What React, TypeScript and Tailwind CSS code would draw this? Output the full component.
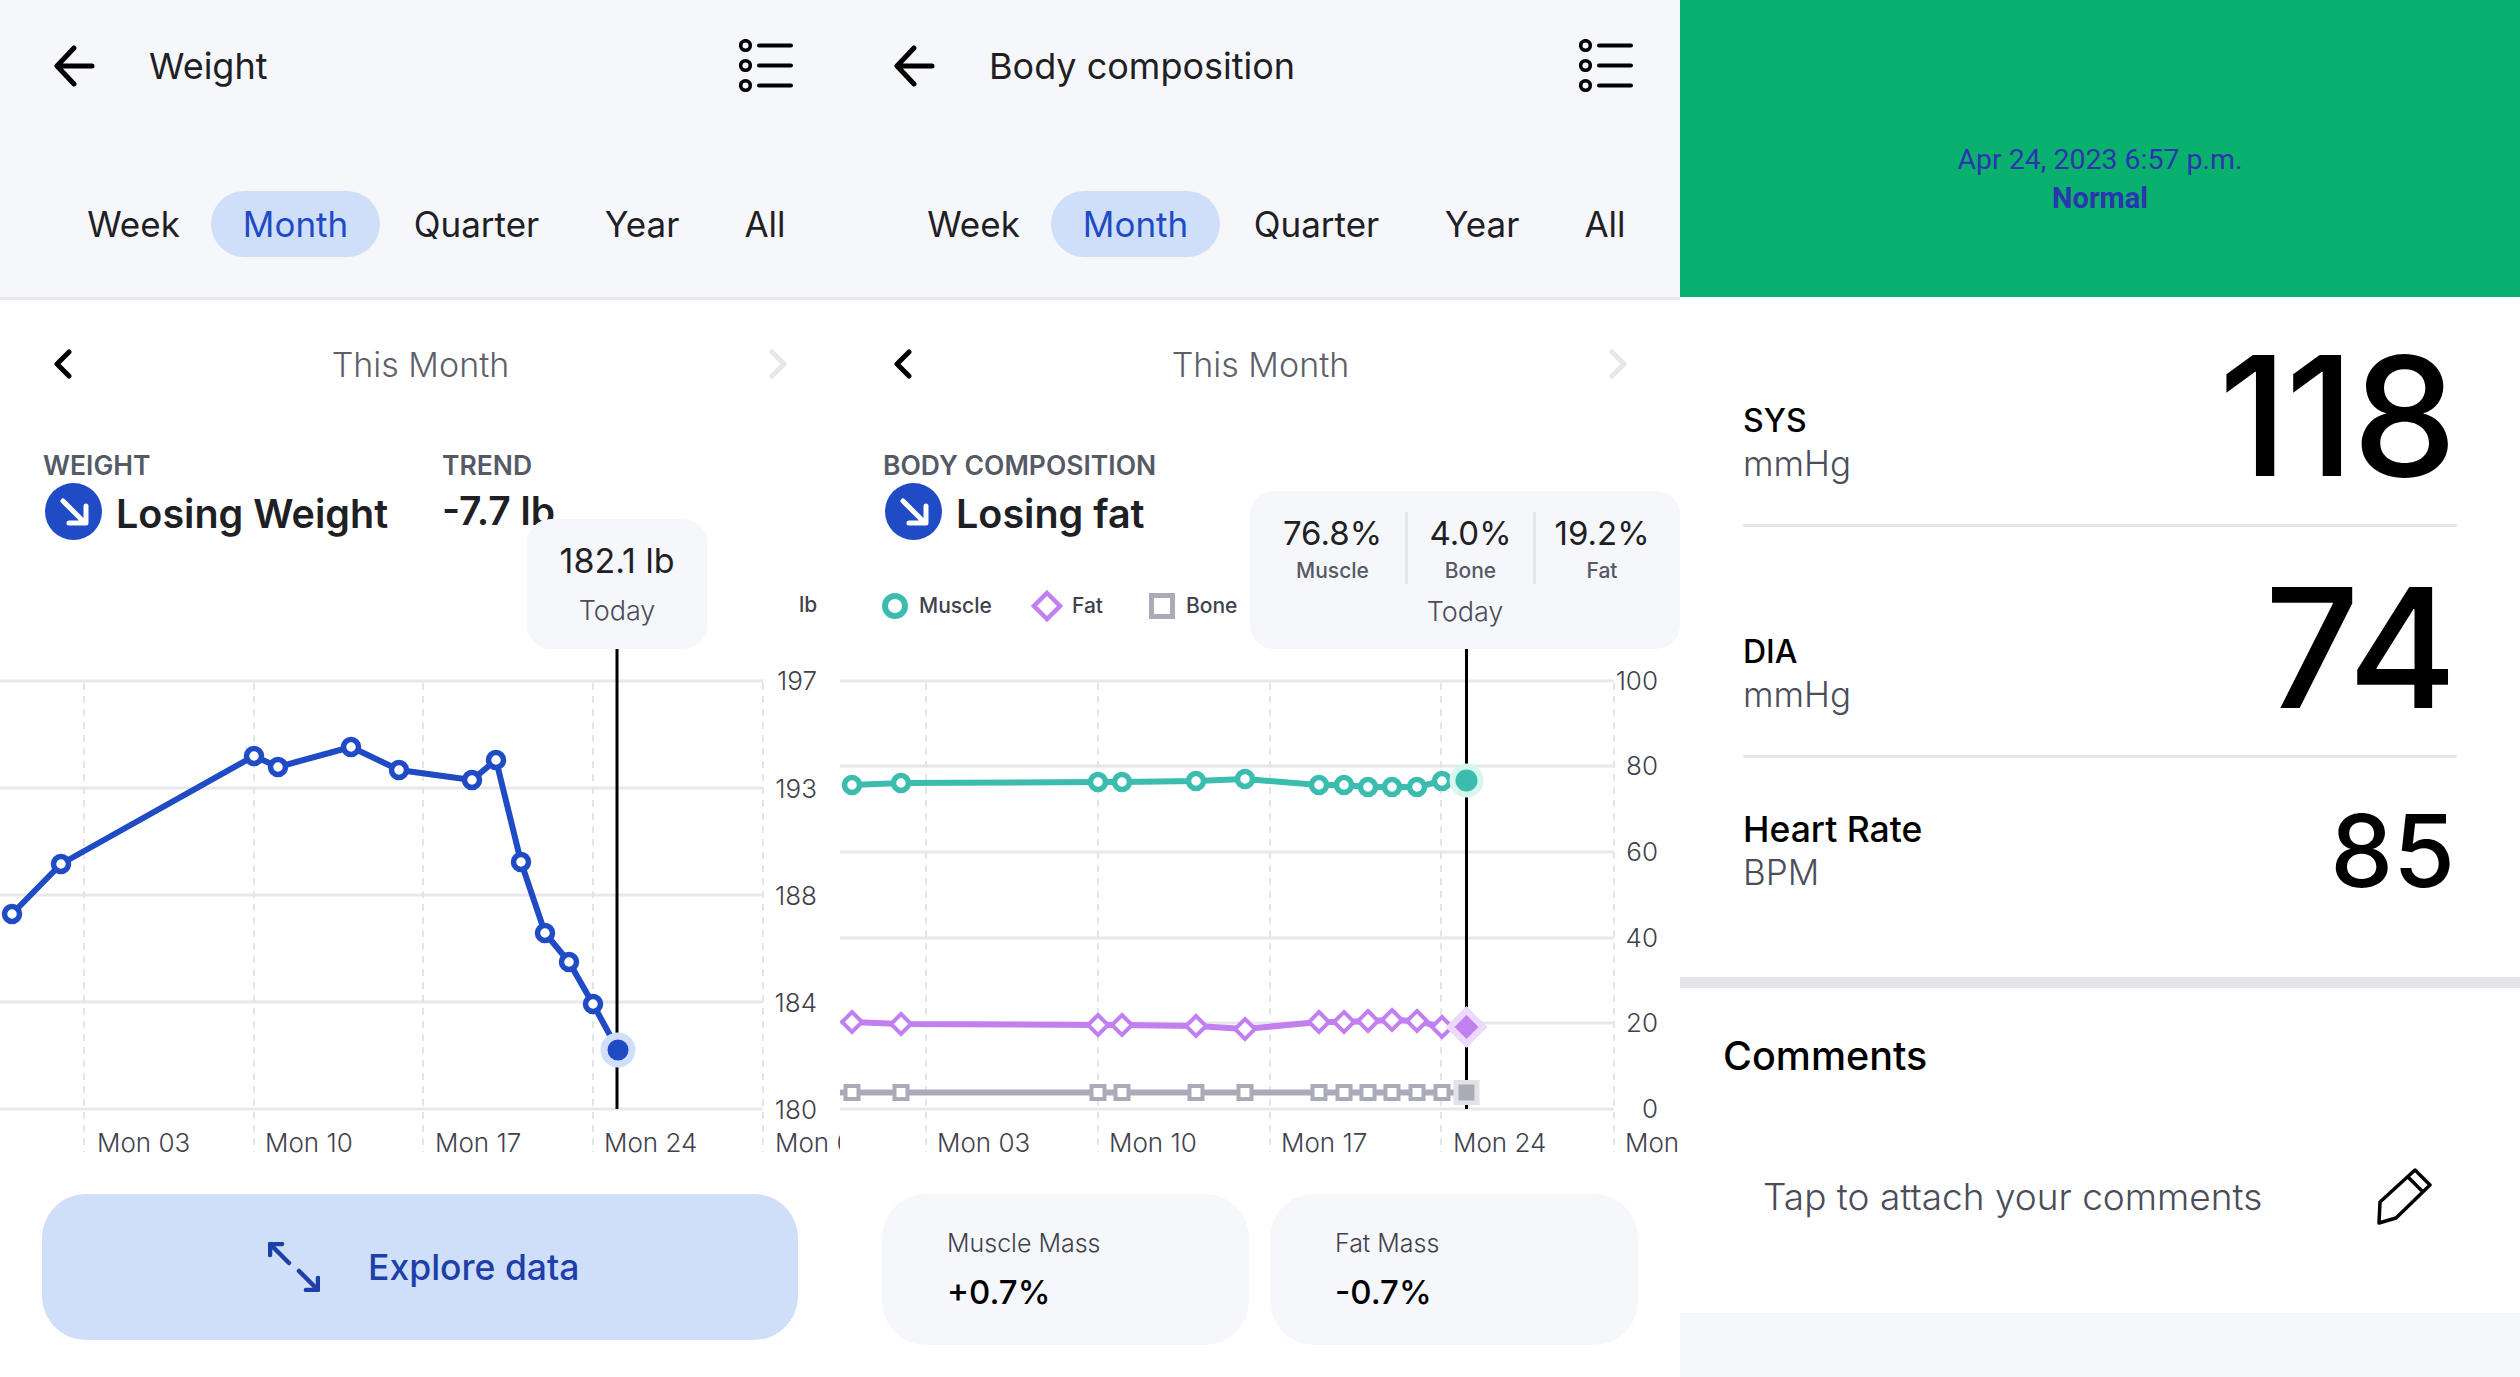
import React from "react";

type Pt = [number, number];

const weightPts: Pt[] = [
  [12, 914], [61, 864], [254, 756], [278, 767], [351, 747], [399, 770],
  [472, 780], [496, 760], [521, 862], [545, 933], [569, 962], [593, 1004],
];
const weightLast: Pt = [618, 1050];

const bodyX = [12, 61, 258, 282, 356, 405, 479, 504, 528, 552, 577, 602];
const muscleY = [785, 783, 782, 782, 781, 779, 785, 785, 787, 787, 787, 781];
const fatY = [1022, 1024, 1025, 1025, 1026, 1029, 1022, 1022, 1021, 1020, 1021, 1027];

const poly = (pts: Pt[]) => pts.map((p) => p.join(",")).join(" ");

const BackIcon = () => (
  <svg width="42" height="42" viewBox="0 0 42 42" fill="none" stroke="#000" strokeWidth="5" strokeLinecap="round" strokeLinejoin="round">
    <path d="M38 21H4M20 3L3 21l17 18" />
  </svg>
);

const ListIcon = () => (
  <svg width="54" height="54" viewBox="0 0 54 54" fill="none" stroke="#000">
    <circle cx="6.5" cy="6.5" r="4.8" strokeWidth="3.6" />
    <circle cx="6.5" cy="26.5" r="4.8" strokeWidth="3.6" />
    <circle cx="6.5" cy="46.5" r="4.8" strokeWidth="3.6" />
    <path d="M20 6.5h32M20 26.5h32M20 46.5h32" strokeWidth="4" strokeLinecap="round" />
  </svg>
);

const Chevron = ({ flip, color }: { flip?: boolean; color: string }) => (
  <svg width="20" height="30" viewBox="0 0 20 30" fill="none" stroke={color} strokeWidth="5" strokeLinecap="round" strokeLinejoin="round" className={flip ? "rotate-180" : ""}>
    <path d="M16 3L4 15l12 12" />
  </svg>
);

const TrendIcon = () => (
  <svg width="57" height="57" viewBox="0 0 57 57" fill="none" className="shrink-0">
    <circle cx="28.5" cy="28.5" r="28.5" fill="#1f4bc4" />
    <path d="M18 18l21 21M41 23v17H24" stroke="#fff" strokeWidth="5" strokeLinecap="round" strokeLinejoin="round" />
  </svg>
);

const Header = ({ title }: { title: string }) => (
  <div className="h-[300px] shrink-0 bg-[#f5f7fb] border-b-[3px] border-[#e5e7eb]">
    <div className="flex h-[132px] items-center pl-[54px] pr-[47px]">
      <BackIcon />
      <div className="ml-[53px] flex-1 text-[36px] text-[#1f2024]">{title}</div>
      <ListIcon />
    </div>
    <div className="mt-[59px] grid h-[66px] grid-cols-[155px_169px_193px_138px_108px] pl-[56px] text-[35px] text-[#1f2024] leading-[66px] text-center">
      <div>Week</div>
      <div className="rounded-full bg-[#cfdffa] text-[#1f4bc4]">Month</div>
      <div>Quarter</div>
      <div>Year</div>
      <div>All</div>
    </div>
  </div>
);

const NavRow = () => (
  <div className="flex h-[128px] items-center justify-between pl-[53px] pr-[52px]">
    <Chevron color="#000" />
    <div className="text-[34px] font-light text-[#5d6069]">This Month</div>
    <Chevron flip color="#e5e7eb" />
  </div>
);

const SmallLabel = ({ children }: { children: React.ReactNode }) => (
  <div className="text-[26.5px] font-semibold leading-[30px] text-[#555a66]">{children}</div>
);

const Trend = ({ text }: { text: string }) => (
  <div className="ml-[2px] mt-[3px] flex items-center gap-[14px]">
    <TrendIcon />
    <div className="pt-[4px] text-[39.5px] font-semibold leading-[48px] text-[#1f2024]">{text}</div>
  </div>
);

const GridLines = ({ ys, xs, right }: { ys: number[]; xs: number[]; right: number }) => (
  <>
    {ys.map((y) => (
      <line key={y} x1="0" x2={right} y1={y} y2={y} stroke="#e7e8ec" strokeWidth="3" />
    ))}
    {xs.map((x) => (
      <line key={x} x1={x} x2={x} y1="683" y2="1152" stroke="#e4e5e9" strokeWidth="2" strokeDasharray="7 6" />
    ))}
  </>
);

const WeightChart = () => {
  const axis: [string, number][] = [["197", 690], ["193", 798], ["188", 905], ["184", 1012], ["180", 1119]];
  const months: [string, number][] = [["Mon 03", 97], ["Mon 10", 265], ["Mon 17", 435], ["Mon 24", 604], ["Mon 03", 775]];
  return (
    <svg width="840" height="511" viewBox="0 649 840 511" className="block">
      <GridLines ys={[681, 788, 895, 1002, 1109]} xs={[84, 254, 423, 593, 763]} right={763} />
      <line x1="617" x2="617" y1="649" y2="1109" stroke="#000" strokeWidth="3" />
      <polyline points={poly([...weightPts, weightLast])} fill="none" stroke="#1f4bc4" strokeWidth="6" strokeLinejoin="round" />
      {weightPts.map(([x, y]) => (
        <circle key={x} cx={x} cy={y} r="7.5" fill="#fff" stroke="#1f4bc4" strokeWidth="5.5" />
      ))}
      <circle cx={weightLast[0]} cy={weightLast[1]} r="17.5" fill="#cfdffa" />
      <circle cx={weightLast[0]} cy={weightLast[1]} r="10.5" fill="#1f4bc4" />
      {axis.map(([t, y]) => (
        <text key={t} x="817" y={y} textAnchor="end" fontSize="26" fontWeight="300" fill="#3f424d">{t}</text>
      ))}
      {months.map(([t, x]) => (
        <text key={x} x={x} y="1152" fontSize="26" fontWeight="300" fill="#3f424d">{t}</text>
      ))}
    </svg>
  );
};

const BodyChart = () => {
  const axis: [string, number][] = [["100", 690], ["80", 775], ["60", 861], ["40", 947], ["20", 1032], ["0", 1118]];
  const months: [string, number][] = [["Mon 03", 97], ["Mon 10", 269], ["Mon 17", 441], ["Mon 24", 613], ["Mon 03", 785]];
  const lx = 626.5;
  return (
    <svg width="840" height="511" viewBox="0 649 840 511" className="block">
      <GridLines ys={[681, 766, 852, 938, 1023, 1109]} xs={[86, 258, 430, 601, 774]} right={774} />
      <line x1={lx} x2={lx} y1="649" y2="1109" stroke="#000" strokeWidth="3" />

      <polyline points={poly([...bodyX.map((x, i): Pt => [x, muscleY[i]]), [lx, 781]])} fill="none" stroke="#3cbcaf" strokeWidth="6" />
      {bodyX.map((x, i) => (
        <circle key={x} cx={x} cy={muscleY[i]} r="7.5" fill="#fff" stroke="#3cbcaf" strokeWidth="5.5" />
      ))}
      <circle cx={lx} cy="780.5" r="17" fill="#d5f7ec" />
      <circle cx={lx} cy="780.5" r="11" fill="#3cbcaf" />

      <polyline points={poly([...bodyX.map((x, i): Pt => [x, fatY[i]]), [lx, 1027]])} fill="none" stroke="#c17ff0" strokeWidth="6" />
      {bodyX.map((x, i) => (
        <path key={x} d={`M${x} ${fatY[i] - 10}l10 10-10 10-10-10z`} fill="#fff" stroke="#c17ff0" strokeWidth="4" />
      ))}
      <path d={`M${lx} 1006l21 21-21 21-21-21z`} fill="#ecd9fb" />
      <path d={`M${lx} 1015l12 12-12 12-12-12z`} fill="#c17ff0" />

      <line x1="0" x2={lx} y1="1092.5" y2="1092.5" stroke="#a9abb8" strokeWidth="6" />
      {bodyX.map((x) => (
        <rect key={x} x={x - 6.5} y="1086" width="13" height="13" fill="#fff" stroke="#a9abb8" strokeWidth="4" />
      ))}
      <rect x={lx - 13} y="1080" width="26" height="25" fill="#e2e3e8" />
      <rect x={lx - 8} y="1084.5" width="16" height="16" fill="#a9abb8" />

      {axis.map(([t, y]) => (
        <text key={t} x="818" y={y} textAnchor="end" fontSize="26" fontWeight="300" fill="#3f424d">{t}</text>
      ))}
      {months.map(([t, x]) => (
        <text key={x} x={x} y="1152" fontSize="26" fontWeight="300" fill="#3f424d">{t}</text>
      ))}
    </svg>
  );
};

const ExploreIcon = () => (
  <svg width="52" height="50" viewBox="0 0 52 50" fill="none" stroke="#1e3fa8" strokeWidth="4.5" strokeLinecap="round" strokeLinejoin="round">
    <path d="M2 13V2h12M2 2l19 19M50 36v12H38M31 29l19 19" />
  </svg>
);

const WeightPanel = () => (
  <div className="flex h-[1377px] w-[840px] flex-col overflow-hidden bg-white">
    <Header title="Weight" />
    <div className="relative flex-1">
      <NavRow />
      <div className="h-[221px] pl-[43px] pt-[22px]">
        <div className="flex">
          <div className="w-[399px]">
            <SmallLabel>WEIGHT</SmallLabel>
            <Trend text="Losing Weight" />
          </div>
          <div>
            <SmallLabel>TREND</SmallLabel>
            <div className="mt-[7px] text-[39px] font-semibold leading-[48px] text-[#1f2024]">-7.7 lb</div>
          </div>
        </div>
      </div>
      <WeightChart />
      <div className="mx-[42px] mt-[34px] flex h-[146px] items-center rounded-[44px] bg-[#cfdffa] pl-[226px]">
        <ExploreIcon />
        <div className="ml-[48px] pt-[2px] text-[35.5px] font-medium text-[#1e3fa8]">Explore data</div>
      </div>

      {/* tooltip sits over the trend value */}
      <div className="absolute left-[527px] top-[219px] flex h-[130px] w-[180px] flex-col items-center rounded-[24px] bg-[#f5f7fb] pt-[20px]">
        <div className="text-[34px] leading-[44px] text-[#1f2024]">182.1 lb</div>
        <div className="mt-[11px] text-[27px] font-light leading-[34px] text-[#4b4d5a]">Today</div>
      </div>
      <div className="absolute left-[799px] top-[292px] text-[21px] font-medium leading-[26px] text-[#3f424d]">lb</div>
    </div>
  </div>
);

const Stat = ({ value, label, className }: { value: string; label: string; className: string }) => (
  <div className={`flex flex-col items-center ${className}`}>
    <div className="text-[33px] leading-[42px] text-[#1f2024]">{value}</div>
    <div className="mt-[4px] text-[21px] font-medium leading-[26px] text-[#555a66]">{label}</div>
  </div>
);

const Legend = () => (
  <div className="mt-[50px] flex h-[32px] items-center -ml-[1px]">
    <svg width="26" height="26" viewBox="0 0 26 26" className="shrink-0"><circle cx="13" cy="13" r="10" fill="#fff" stroke="#3cbcaf" strokeWidth="6" /></svg>
    <span className="ml-[11px] w-[112px] text-[21px] font-medium text-[#3f424d]">Muscle</span>
    <svg width="32" height="32" viewBox="0 0 32 32" className="shrink-0"><path d="M16 3l13 13-13 13L3 16z" fill="#fff" stroke="#c17ff0" strokeWidth="4.5" /></svg>
    <span className="ml-[9px] w-[77px] text-[21px] font-medium text-[#3f424d]">Fat</span>
    <svg width="26" height="26" viewBox="0 0 26 26" className="shrink-0"><rect x="2.5" y="2.5" width="21" height="21" fill="#fff" stroke="#a9abb8" strokeWidth="5" /></svg>
    <span className="ml-[11px] text-[21px] font-medium text-[#3f424d]">Bone</span>
  </div>
);

const MassCard = ({ label, value }: { label: string; value: string }) => (
  <div className="h-[151px] rounded-[44px] bg-[#f5f7fb] pl-[65px] pt-[33px]">
    <div className="text-[25px] font-light leading-[32px] text-[#3f424d]">{label}</div>
    <div className="mt-[12px] text-[33px] font-medium leading-[42px] text-black">{value}</div>
  </div>
);

const BodyPanel = () => (
  <div className="flex h-[1377px] w-[840px] flex-col overflow-hidden bg-white">
    <Header title="Body composition" />
    <div className="relative flex-1">
      <NavRow />
      <div className="h-[221px] pl-[43px] pt-[22px]">
        <SmallLabel>BODY COMPOSITION</SmallLabel>
        <Trend text="Losing fat" />
        <Legend />
      </div>
      <BodyChart />
      <div className="mx-[42px] mt-[34px] grid grid-cols-[367px_368px] gap-[21px]">
        <MassCard label="Muscle Mass" value="+0.7%" />
        <MassCard label="Fat Mass" value="-0.7%" />
      </div>

      <div className="absolute left-[410px] top-[191px] h-[158px] w-[430px] rounded-[24px] bg-[#f5f7fb] pt-[21px]">
        <div className="flex h-[72px]">
          <Stat value="76.8%" label="Muscle" className="w-[155px] pl-[10px]" />
          <div className="h-[72px] w-[3px] bg-[#e5e7eb]" />
          <Stat value="4.0%" label="Bone" className="w-[125px]" />
          <div className="h-[72px] w-[3px] bg-[#e5e7eb]" />
          <Stat value="19.2%" label="Fat" className="w-[144px] pr-[12px]" />
        </div>
        <div className="mt-[11px] text-center text-[27px] font-light leading-[34px] text-[#4b4d5a]">Today</div>
      </div>
    </div>
  </div>
);

const Reading = ({ height, children }: { height: string; children: React.ReactNode }) => (
  <div className={`flex items-center justify-between pr-[2px] ${height}`}>
    {children}
  </div>
);

const UnitLabel = ({ label, unit, labelSize, className }: { label: string; unit: string; labelSize: string; className: string }) => (
  <div className={className}>
    <div className={`${labelSize} font-medium leading-[40px] text-black`}>{label}</div>
    <div className="text-[35px] font-light leading-[44px] text-[#4b4d5a]">{unit}</div>
  </div>
);

const PencilIcon = () => (
  <svg width="55" height="57" viewBox="0 0 55 57" fill="none" stroke="#000" strokeWidth="3.5" strokeLinejoin="round">
    <path d="M2 55l1-21L38 2l15 15-34 33zM31 9l15 15" />
  </svg>
);

const ReadingPanel = () => (
  <div className="flex h-[1377px] w-[840px] flex-col overflow-hidden bg-white">
    <div className="flex h-[297px] shrink-0 flex-col items-center justify-center bg-[#0ab06d] pt-[60px] [font-family:Roboto,sans-serif] text-[#2a35b0]">
      <div className="text-[28.5px] leading-[39px]">Apr 24, 2023 6:57 p.m.</div>
      <div className="text-[29px] font-bold leading-[39px]">Normal</div>
    </div>
    <div className="mx-[63px]">
      <div className="border-b-[3px] border-[#e5e7eb]">
        <Reading height="h-[227px]">
          <UnitLabel label="SYS" unit="mmHg" labelSize="text-[32px]" className="pt-[65px]" />
          <div className="pt-[11px] text-[166px] font-medium leading-none tracking-[-2px] text-black">118</div>
        </Reading>
      </div>
      <div className="border-b-[3px] border-[#e5e7eb]">
        <Reading height="h-[228px]">
          <UnitLabel label="DIA" unit="mmHg" labelSize="text-[32px]" className="pt-[65px]" />
          <div className="pt-[14px] text-[166px] font-medium leading-none tracking-[-2px] text-black">74</div>
        </Reading>
      </div>
      <Reading height="h-[219px]">
        <UnitLabel label="Heart Rate" unit="BPM" labelSize="text-[35.5px]" className="-mt-[32px]" />
        <div className="-mt-[34px] text-[100px] font-medium leading-none text-black">85</div>
      </Reading>
    </div>
    <div className="h-[11px] shrink-0 bg-[#e3e5e9]" />
    <div className="h-[325px] shrink-0">
      <div className="pl-[43px] pt-[46px] text-[39.5px] font-medium leading-[44px] text-black">Comments</div>
      <div className="mt-[90px] flex items-center pl-[83px] pr-[88px]">
        <div className="flex-1 text-[37px] font-light text-[#4b4d5a]">Tap to attach your comments</div>
        <PencilIcon />
      </div>
    </div>
    <div className="flex-1 bg-[#f5f7fb]" />
  </div>
);

export default function App() {
  return (
    <div className="flex h-[1377px] w-[2520px] overflow-hidden bg-white [font-family:Inter,sans-serif]">
      <WeightPanel />
      <BodyPanel />
      <ReadingPanel />
    </div>
  );
}
